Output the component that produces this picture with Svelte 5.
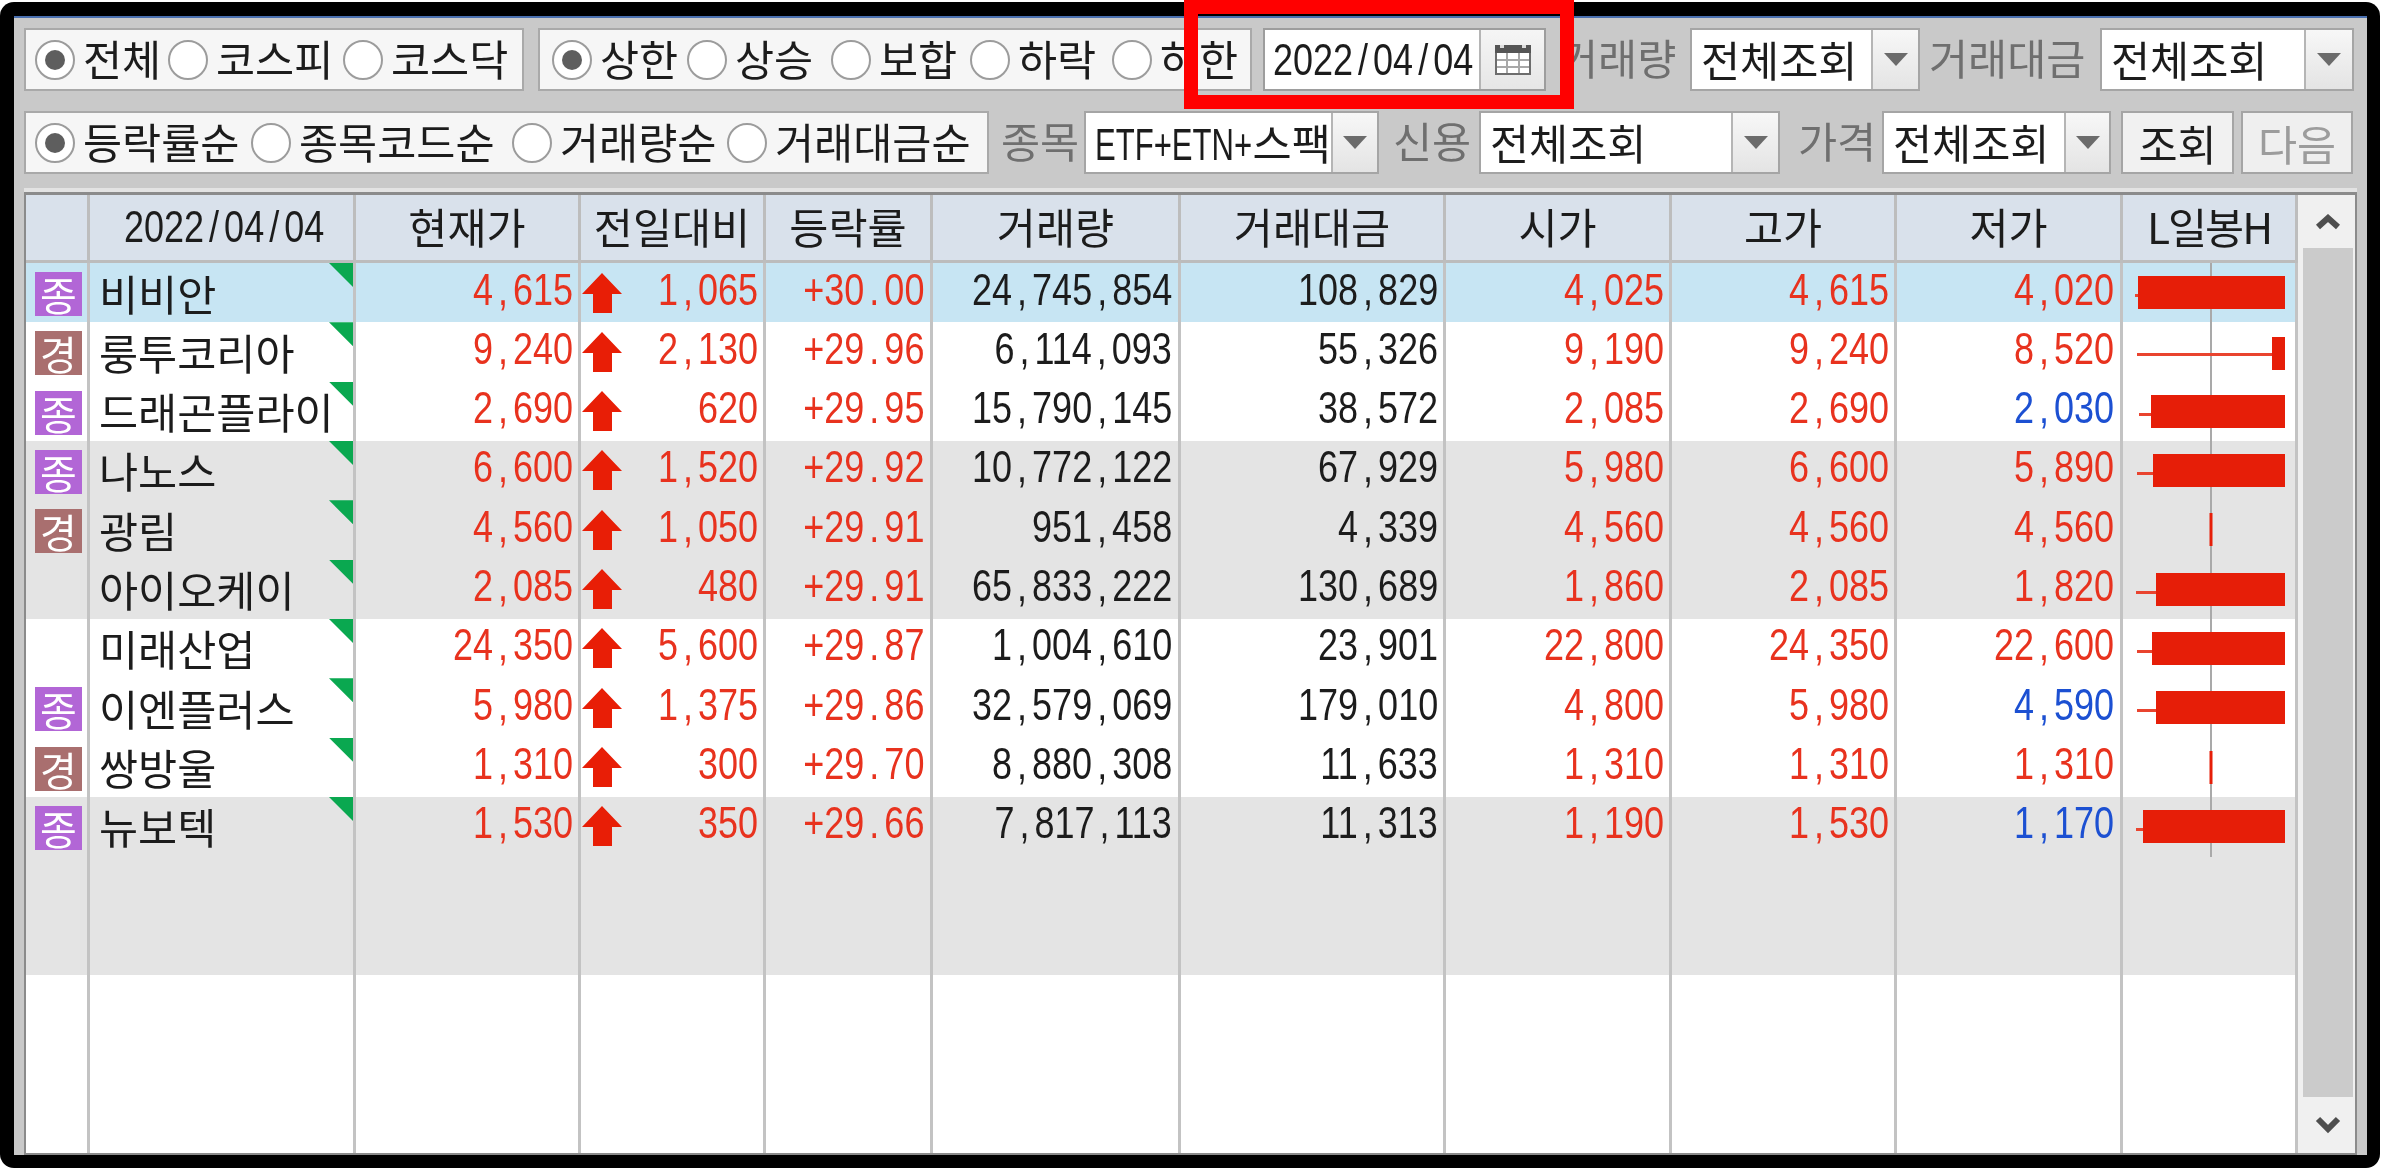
<script>
  const rows = [
    { t: '종', name: '비비안', v: ['4,615','1,065','+30.00','24,745,854','108,829','4,025','4,615','4,020'], wick: 12, body: 15, bg: 'sel' },
    { t: '경', name: '룽투코리아', v: ['9,240','2,130','+29.96','6,114,093','55,326','9,190','9,240','8,520'], wick: 14, body: 149, bg: '' },
    { t: '종', name: '드래곤플라이', v: ['2,690','620','+29.95','15,790,145','38,572','2,085','2,690','2,030'], wick: 16, body: 28, bg: '', low: true },
    { t: '종', name: '나노스', v: ['6,600','1,520','+29.92','10,772,122','67,929','5,980','6,600','5,890'], wick: 14, body: 30, bg: 'alt' },
    { t: '경', name: '광림', v: ['4,560','1,050','+29.91','951,458','4,339','4,560','4,560','4,560'], tick: true, bg: 'alt' },
    { t: '', name: '아이오케이', v: ['2,085','480','+29.91','65,833,222','130,689','1,860','2,085','1,820'], wick: 13, body: 33, bg: 'alt' },
    { t: '', name: '미래산업', v: ['24,350','5,600','+29.87','1,004,610','23,901','22,800','24,350','22,600'], wick: 14, body: 29, bg: '' },
    { t: '종', name: '이엔플러스', v: ['5,980','1,375','+29.86','32,579,069','179,010','4,800','5,980','4,590'], wick: 14, body: 33, bg: '', low: true },
    { t: '경', name: '쌍방울', v: ['1,310','300','+29.70','8,880,308','11,633','1,310','1,310','1,310'], tick: true, bg: '' },
    { t: '종', name: '뉴보텍', v: ['1,530','350','+29.66','7,817,113','11,313','1,190','1,530','1,170'], wick: 13, body: 20, bg: 'alt', low: true }
  ];
  const heads = ['현재가', '전일대비', '등락률', '거래량', '거래대금', '시가', '고가', '저가'];
  const blanks = Array(11).fill(0);
  const parts = (s) => s.split(/([,./])/).filter(Boolean);
</script>

{#snippet num(s, origin)}<span class="num {origin}">{#each parts(s) as p}{#if p === ',' || p === '.' || p === '/'}<span class="sep">{p}</span>{:else}{p}{/if}{/each}</span>{/snippet}

{#snippet radio(label, on, w)}
  <span class="radio" style="width:{w}px"><i class="dot" class:on></i><span class="rlabel">{label}</span></span>
{/snippet}

{#snippet combo(text, w, btn)}
  <div class="combo" style="width:{w}px">
    <div class="value">{text}</div>
    <div class="cbtn" style="width:{btn}px"><i class="tri"></i></div>
  </div>
{/snippet}

<div class="page">
  <div class="frame">
    <div class="panel">
      <div class="bar first">
        <div class="group g1">
          {@render radio('전체', true, 133)}
          {@render radio('코스피', false, 175)}
          {@render radio('코스닥', false, 170)}
        </div>
        <div class="group g2">
          {@render radio('상한', true, 135)}
          {@render radio('상승', false, 144)}
          {@render radio('보합', false, 139)}
          {@render radio('하락', false, 142)}
          {@render radio('하한', false, 130)}
        </div>
        <div class="date">
          <div class="dval">{@render num('2022/04/04', 'ol')}</div>
          <div class="dbtn">
            <svg width="36" height="30" viewBox="0 0 36 30">
              <rect x="1" y="1" width="34" height="28" fill="#fff" stroke="#6d6d6d" stroke-width="2"/>
              <rect x="0" y="0" width="36" height="8" fill="#555"/>
              <rect x="5" y="0" width="4" height="3" fill="#ddd"/>
              <rect x="27" y="0" width="4" height="3" fill="#ddd"/>
              <path d="M2 15H34M2 22H34M12 8V28M24 8V28" stroke="#a8a8a8" stroke-width="2" fill="none"/>
            </svg>
          </div>
        </div>
        <span class="label l1">거래량</span>
        {@render combo('전체조회', 230, 47)}
        <span class="label l2">거래대금</span>
        {@render combo('전체조회', 254, 48)}
      </div>

      <div class="bar second">
        <div class="group g3">
          {@render radio('등락률순', true, 216)}
          {@render radio('종목코드순', false, 261)}
          {@render radio('거래량순', false, 215)}
          {@render radio('거래대금순', false, 245)}
        </div>
        <span class="label l3">종목</span>
        <div class="combo etf">
          <div class="value"><span class="latin">ETF+ETN+</span>스팩</div>
          <div class="cbtn" style="width:46px"><i class="tri"></i></div>
        </div>
        <span class="label l4">신용</span>
        {@render combo('전체조회', 301, 47)}
        <span class="label l5">가격</span>
        {@render combo('전체조회', 229, 45)}
        <button class="btn b1">조회</button>
        <button class="btn b2" disabled>다음</button>
      </div>

      <div class="table">
        <div class="grid">
          <div class="line head">
            <div class="hcell"></div>
            <div class="hcell hdate">{@render num('2022/04/04', 'oc')}</div>
            {#each heads as h}
              <div class="hcell">{h}</div>
            {/each}
            <div class="hcell hcandle">L일봉H</div>
          </div>
          {#each rows as r}
            <div class="line row {r.bg}">
              <div class="cell tcell">
                {#if r.t}<span class="badge" class:jong={r.t === '종'} class:gyeong={r.t === '경'}>{r.t}</span>{/if}
              </div>
              <div class="cell namecell"><span class="name">{r.name}</span><i class="flag"></i></div>
              <div class="cell n red">{@render num(r.v[0], 'or')}</div>
              <div class="cell n red chg">
                <svg class="arrow" width="40" height="40" viewBox="0 0 40 40"><path d="M20 0L40 21H30V40H11V21H0Z" fill="#e81e06"/></svg>
                {@render num(r.v[1], 'or')}
              </div>
              <div class="cell n red p7">{@render num(r.v[2], 'or')}</div>
              <div class="cell n p7">{@render num(r.v[3], 'or')}</div>
              <div class="cell n">{@render num(r.v[4], 'or')}</div>
              <div class="cell n red">{@render num(r.v[5], 'or')}</div>
              <div class="cell n red">{@render num(r.v[6], 'or')}</div>
              <div class="cell n p7" class:red={!r.low} class:blue={r.low}>{@render num(r.v[7], 'or')}</div>
              <div class="cell">
                <svg class="candle" width="172" height="60" viewBox="0 0 172 60">
                  <rect x="87" y="0" width="2" height="60" fill="#a9a9a9"/>
                  {#if r.tick}
                    <rect x="86.5" y="13" width="3" height="33" fill="#e61e08"/>
                  {:else}
                    <rect x={r.wick} y="31" width={r.body - r.wick + 1} height="3" fill="#e9442f"/>
                    <rect x={r.body} y={r.body > 100 ? 15 : 13} width={162 - r.body} height="33" fill="#e61e08"/>
                  {/if}
                </svg>
              </div>
            </div>
          {/each}
          {#each [0, 1] as _}
            <div class="line row alt">
              {#each blanks as b}<div class="cell"></div>{/each}
            </div>
          {/each}
          <div class="line fill">
            {#each blanks as b}<div class="cell"></div>{/each}
          </div>
        </div>
        <div class="scroll">
          <div class="sbtn up"><svg width="26" height="16" viewBox="0 0 26 16"><path d="M3 13L13 4L23 13" fill="none" stroke="#4e4e4e" stroke-width="6"/></svg></div>
          <div class="thumb"></div>
          <div class="sbtn down"><svg width="26" height="22" viewBox="0 0 26 22"><path d="M3 5L13 15L23 5" fill="none" stroke="#4e4e4e" stroke-width="6"/></svg></div>
        </div>
      </div>
    </div>
  </div>
  <div class="mark"></div>
</div>

<style>
  :global(body) { margin: 0; background: #fff; }
  .page { position: relative; width: 2381px; height: 1170px; overflow: hidden; font-family: "Noto Sans CJK KR", sans-serif; font-size: 42.5px; color: #1c1c1c; }
  .frame { box-sizing: border-box; width: 2380px; height: 1166px; margin-top: 2px; background: #000; border-radius: 14px; padding: 14px 13px 13px 14px; }
  .panel { box-sizing: border-box; height: 100%; background: #c9c9c9; border-top: 2px solid #4a70b0; padding-left: 10px; filter: blur(0.7px); }
  .num { display: inline-block; font-family: "Liberation Sans", sans-serif; font-size: 45px; line-height: 1; white-space: nowrap; transform: scaleX(0.8); }
  .ol { transform-origin: left center; }
  .or { transform-origin: right center; }
  .oc { transform-origin: center center; }
  .sep { display: inline-block; width: 25px; text-align: center; }
  .bar { display: flex; align-items: stretch; height: 63px; }
  .first { padding-top: 10px; }
  .second { margin-top: 10px; padding-top: 10px; }
  .group { box-sizing: border-box; display: flex; align-items: center; background: #f6f6f6; border: 2px solid #a9a9a9; padding-left: 9px; white-space: nowrap; }
  .g1 { width: 500px; }
  .g2 { width: 714px; margin-left: 14px; padding-left: 12px; }
  .g3 { width: 965px; }
  .radio { display: flex; align-items: center; flex: none; height: 100%; }
  .dot { flex: none; box-sizing: border-box; width: 40px; height: 40px; border: 2px solid #9c9c9c; border-radius: 50%; background: #fff; display: flex; align-items: center; justify-content: center; }
  .dot.on::after { content: ""; width: 20px; height: 20px; border-radius: 50%; background: #5e5e5e; }
  .rlabel { margin-left: 8px; line-height: 40px; padding-bottom: 3px; }
  .date { box-sizing: border-box; width: 283px; margin-left: 11px; display: flex; background: #fff; border: 2px solid #9d9d9d; }
  .dval { flex: 1; min-width: 0; display: flex; align-items: center; padding-left: 8px; }
  .dbtn { flex: none; box-sizing: border-box; width: 65px; display: flex; align-items: center; justify-content: center; background: linear-gradient(#f5f5f5, #e6e6e6); border-left: 2px solid #b5b5b5; }
  .label { color: #6f6f6f; white-space: nowrap; line-height: 58px; }
  .l1 { margin-left: 13px; width: 131px; }
  .l2 { margin-left: 9px; width: 171px; }
  .l3 { margin-left: 12px; width: 83px; }
  .l4 { margin-left: 14px; width: 86px; }
  .l5 { margin-left: 18px; width: 84px; }
  .combo { box-sizing: border-box; display: flex; background: #fff; border: 2px solid #a5a5a5; flex: none; }
  .etf { width: 295px; }
  .value { flex: 1; min-width: 0; padding-left: 9px; line-height: 58px; white-space: nowrap; }
  .latin { display: inline-block; font-family: "Liberation Sans", sans-serif; font-size: 45px; line-height: 1; transform: scaleX(0.69); transform-origin: left center; margin-right: -70px; }
  .cbtn { flex: none; box-sizing: border-box; display: flex; align-items: center; justify-content: center; background: linear-gradient(#f7f7f7, #e4e4e4); border-left: 2px solid #b5b5b5; }
  .tri { width: 0; height: 0; border-left: 12px solid transparent; border-right: 12px solid transparent; border-top: 13px solid #6b6b6b; }
  .btn { box-sizing: border-box; padding: 0; font: inherit; background: #f1f1f1; border: 2px solid #a5a5a5; color: #1c1c1c; line-height: 56px; }
  .b1 { width: 113px; margin-left: 10px; }
  .b2 { width: 112px; margin-left: 7px; color: #9c9c9c; background: #efefef; }
  .table { box-sizing: border-box; display: flex; width: 2333px; height: 963px; margin-top: 18px; border: 2px solid #8b8b8b; border-top-width: 3px; background: #fff; box-shadow: 0 -4px 0 #e3e3e3; }
  .grid { display: flex; flex-direction: column; width: 2272px; flex: none; }
  .line { display: grid; grid-template-columns: 64px 266px 225px 185px 167px 248px 265px 226px 225px 226px 175px; }
  .head { height: 68px; background: #d9e1eb; border-bottom: 3px solid #bcbcbc; box-sizing: border-box; }
  .hcell { box-sizing: border-box; display: flex; align-items: center; justify-content: center; border-right: 3px solid #bdbdbd; padding-bottom: 9px; white-space: nowrap; }
  .hdate { padding-left: 6px; padding-bottom: 7px; }
  .hcandle { letter-spacing: -2px; }
  .row { height: 59.33px; }
  .sel { background: #c7e5f3; }
  .alt { background: #e4e4e4; }
  .fill { flex: 1; }
  .cell { box-sizing: border-box; border-right: 3px solid #c3c3c3; position: relative; min-width: 0; }
  .candle { display: block; }
  .tcell { display: flex; align-items: center; padding-left: 9px; padding-top: 2px; }
  .badge { width: 47px; height: 44px; display: flex; align-items: center; justify-content: center; color: #fff; font-size: 40px; line-height: 44px; }
  .jong { background: #b266d6; }
  .gyeong { background: #a96f6f; }
  .namecell { display: flex; align-items: center; padding-left: 9px; padding-bottom: 1px; white-space: nowrap; }
  .name { line-height: 50px; }
  .flag { position: absolute; right: 0; top: 0; width: 24px; height: 24px; background: #0aa850; clip-path: polygon(0 0, 100% 0, 100% 100%); }
  .n { display: flex; align-items: center; justify-content: flex-end; padding-right: 5px; padding-bottom: 8px; white-space: nowrap; }
  .p7 { padding-right: 6px; }
  .red { color: #e8321e; }
  .blue { color: #1c50d2; }
  .chg { justify-content: space-between; padding-left: 1px; padding-bottom: 0; }
  .chg .num { position: relative; top: -4px; }
  .arrow { flex: none; margin-top: -1px; }
  .scroll { flex: 1; display: flex; flex-direction: column; background: #f0f0f0; padding: 0 2px 0 5px; }
  .sbtn { flex: none; display: flex; align-items: center; justify-content: center; }
  .up { height: 53px; }
  .down { height: 56px; }
  .thumb { flex: 1; background: #cbcbcb; }
  .mark { position: absolute; box-sizing: border-box; left: 1184px; top: 0; width: 390px; height: 109px; border: 14px solid #f00; }
</style>
